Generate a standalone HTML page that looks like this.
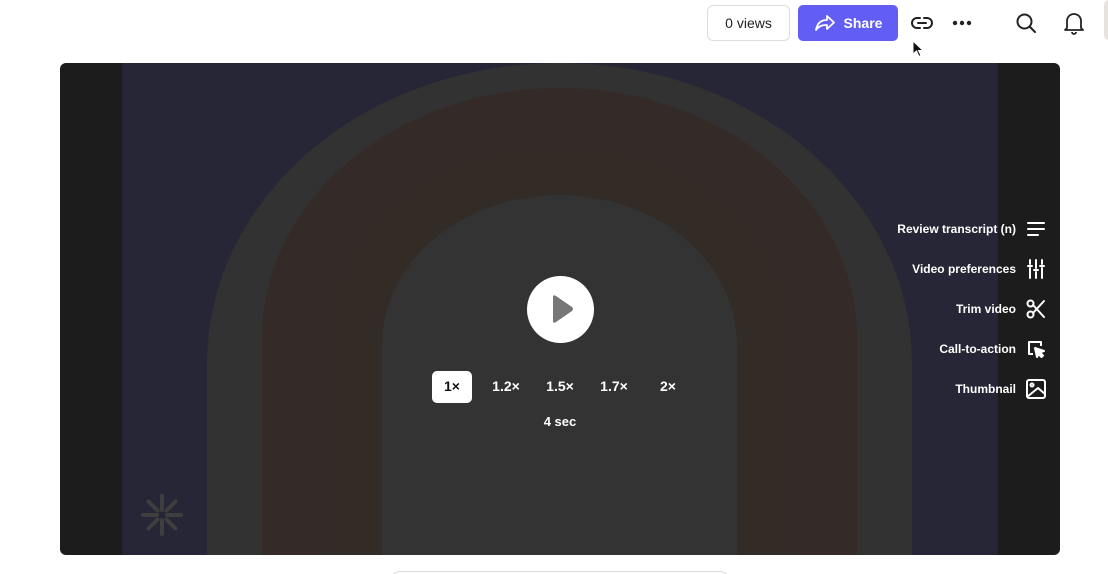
<!DOCTYPE html>
<html><head><meta charset="utf-8"><style>
*{margin:0;padding:0;box-sizing:border-box}
html,body{width:1108px;height:574px;overflow:hidden}
body{background:#fff;position:relative;font-family:"Liberation Sans",sans-serif}
.abs{position:absolute}
.views{left:707px;top:5px;width:83px;height:36px;border:1px solid #ddd;border-radius:6px;font-size:14px;color:#222;display:flex;align-items:center;justify-content:center}
.share{left:798px;top:5px;width:100px;height:36px;background:#625df5;border-radius:5px;color:#fff;font-size:14px;font-weight:bold;display:flex;align-items:center;justify-content:center;gap:8px}
.video{left:60px;top:63px;width:1000px;height:492px;border-radius:6px;overflow:hidden;background:#1c1c1c}
.arch{position:absolute;bottom:0}
.side{position:absolute;right:14px;display:flex;align-items:center;gap:10px;color:#fff;font-size:12px;font-weight:bold}
.speed{position:absolute;top:308px;color:#fff;font-size:14px;font-weight:bold;height:32px;line-height:30px;text-align:center;width:40px}
</style></head><body>
<div class="abs views">0 views</div>
<div class="abs share"><svg width="22" height="18" viewBox="0 0 22 18" fill="none" stroke="#fff" stroke-width="1.8" stroke-linejoin="round"><path d="M13 2v4C6 6 3 10 2 16c3-4 6-5 11-5v4l7-6.5z"/></svg>Share</div>
<svg class="abs" style="left:910px;top:12px" width="24" height="22" viewBox="0 0 24 22" fill="none" stroke="#222" stroke-width="2" stroke-linecap="round"><path d="M10 6H7a5 5 0 000 10h3M14 6h3a5 5 0 010 10h-3M8 11h8"/></svg>
<svg class="abs" style="left:952px;top:20px" width="20" height="6"><circle cx="3" cy="3" r="2.2" fill="#222"/><circle cx="10" cy="3" r="2.2" fill="#222"/><circle cx="17" cy="3" r="2.2" fill="#222"/></svg>
<svg class="abs" style="left:1015px;top:12px" width="22" height="22" viewBox="0 0 22 22" fill="none" stroke="#222" stroke-width="2" stroke-linecap="round"><circle cx="9.5" cy="9.5" r="7"/><path d="M15 15l5 5"/></svg>
<svg class="abs" style="left:1063px;top:11px" width="22" height="24" viewBox="0 0 22 24" fill="none" stroke="#222" stroke-width="1.8" stroke-linejoin="round"><path d="M4 17V10a7 7 0 0114 0v7l2 2H2z"/><path d="M9 21a2 2 0 004 0"/></svg>
<div class="abs" style="left:1104px;top:0;width:10px;height:40px;background:#e6e3de;border-radius:6px"></div>
<svg class="abs" style="left:912px;top:40px" width="12" height="18" viewBox="0 0 12 18"><path d="M1 1v13l3.5-3 2.5 5.5 2-1-2.5-5H11z" fill="#111" stroke="#fff" stroke-width="1"/></svg>

<div class="abs video">
  <div class="arch" style="left:62px;width:876px;top:0;background:#262636"></div>
  <div class="arch" style="left:147px;width:705px;height:492px;background:#323232;border-radius:352px 352px 0 0/300px 300px 0 0"></div>
  <div class="arch" style="left:202px;width:595px;height:467px;background:#342b28;border-radius:298px 298px 0 0/250px 250px 0 0"></div>
  <div class="arch" style="left:262px;width:475px;height:410px;background:#332b26;border-radius:238px 238px 0 0/200px 200px 0 0"></div>
  <div class="arch" style="left:322px;width:355px;height:360px;background:#333;border-radius:178px 178px 0 0/150px 150px 0 0"></div>
  <svg style="position:absolute;left:80px;top:430px" width="44" height="44" viewBox="0 0 44 44" stroke="#3e3e3e" stroke-width="4" stroke-linecap="round"><path d="M22 3v14M22 27v14M3 22h14M27 22h14M8.5 8.5l9 9M26.5 26.5l9 9M35.5 8.5l-9 9M17.5 26.5l-9 9"/></svg>
  <div style="position:absolute;left:467px;top:213px;width:67px;height:67px;border-radius:50%;background:#fff"></div>
  <svg style="position:absolute;left:490px;top:230px" width="26" height="32" viewBox="0 0 26 32"><path d="M3 4Q3 1 6 3L22 14Q24 16 22 18L6 29Q3 31 3 28Z" fill="#777"/></svg>
  <div class="speed" style="left:372px;background:#fff;color:#111;border-radius:5px">1×</div>
  <div class="speed" style="left:426px">1.2×</div>
  <div class="speed" style="left:480px">1.5×</div>
  <div class="speed" style="left:534px">1.7×</div>
  <div class="speed" style="left:588px">2×</div>
  <div style="position:absolute;left:470px;top:351px;width:60px;text-align:center;color:#fff;font-size:13px;font-weight:bold">4 sec</div>

  <div class="side" style="top:156px">Review transcript (n)<svg width="20" height="20" viewBox="0 0 20 20" stroke="#fff" stroke-width="2" stroke-linecap="round"><path d="M2 4h16M2 10h16M2 16h10"/></svg></div>
  <div class="side" style="top:196px">Video preferences<svg width="20" height="20" viewBox="0 0 20 20" stroke="#fff" stroke-width="2" stroke-linecap="round"><path d="M4 1v4M4 9v10M10 1v8M10 13v6M16 1v4M16 9v10M2 7h4M8 11h4M14 7h4"/></svg></div>
  <div class="side" style="top:236px">Trim video<svg width="20" height="20" viewBox="0 0 20 20" fill="none" stroke="#fff" stroke-width="2" stroke-linecap="round"><circle cx="4.5" cy="4.5" r="3"/><circle cx="4.5" cy="15.5" r="3"/><path d="M7 6l11 12M7 14l11-12"/></svg></div>
  <div class="side" style="top:276px">Call-to-action<svg width="20" height="20" viewBox="0 0 20 20" fill="none" stroke="#fff" stroke-width="2" stroke-linejoin="round"><path d="M7 15H3V3h12v4"/><path d="M9 9l9 3-4 1.5 3 3-1.5 1.5-3-3L11 18z" fill="#fff"/></svg></div>
  <div class="side" style="top:316px">Thumbnail<svg width="20" height="20" viewBox="0 0 20 20" fill="none" stroke="#fff" stroke-width="2" stroke-linejoin="round"><rect x="1" y="1" width="18" height="18" rx="2"/><circle cx="6" cy="6" r="1.5"/><path d="M1 18l11-9 7 6"/></svg></div>
</div>
<div class="abs" style="left:390px;top:571px;width:340px;height:20px;border:1px solid #ddd;border-radius:10px"></div>
</body></html>
